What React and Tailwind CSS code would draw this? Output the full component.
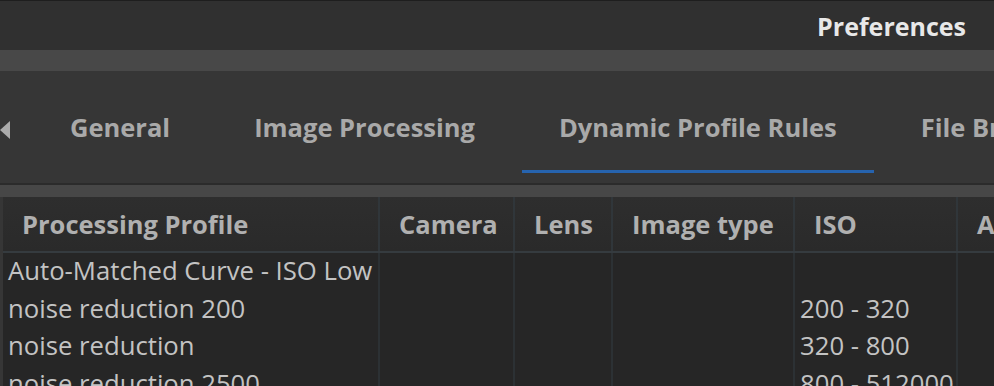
import React from 'react';

const tabs = ['General', 'Image Processing', 'Dynamic Profile Rules', 'File Browser'];
const activeTab = 2;

const columns = [
  { label: 'Processing Profile', width: 'w-[377px]' },
  { label: 'Camera', width: 'w-[135px]' },
  { label: 'Lens', width: 'w-[98px]' },
  { label: 'Image type', width: 'w-[182px]' },
  { label: 'ISO', width: 'w-[163px]' },
  { label: 'Aperture', width: 'w-[160px]' },
];

const rows = [
  ['Auto-Matched Curve - ISO Low', '', '', '', '', ''],
  ['noise reduction 200', '', '', '', '200 - 320', ''],
  ['noise reduction', '', '', '', '320 - 800', ''],
  ['noise reduction 2500', '', '', '', '800 - 512000', ''],
];

function App() {
  return (
    <div className="w-[994px] h-[386px] overflow-hidden bg-[#363636] font-['Open_Sans',sans-serif]">
      {/* title bar */}
      <div className="h-[50px] border-t border-[#1e1e1e] bg-[#303030] flex items-center justify-end pr-[28px] pt-[2px]">
        <span className="text-[25px] font-bold text-[#e8e8e8]">Preferences</span>
      </div>
      <div className="h-[21px] bg-[#484848]" />

      {/* tabs */}
      <div className="h-[112px] bg-[#363636] flex items-stretch overflow-hidden">
        <div className="w-[28px] shrink-0 flex items-center pt-[6px]">
          <svg width="11" height="18" viewBox="0 0 11 18">
            <path d="M10 0 L0 9 L10 18 Z" fill="#ababab" />
          </svg>
        </div>
        {tabs.map((t, i) => (
          <div key={t} className="px-[42px] flex flex-col shrink-0">
            <div className="flex-1 flex items-center pt-[13px]">
              <span className="text-[25.5px] font-bold text-[#a9a9a9] whitespace-nowrap">{t}</span>
            </div>
            <div className={i === activeTab ? 'h-[3px] bg-[#2663ae] -mx-[37px] mb-[10px]' : 'h-[3px] mb-[10px]'} />
          </div>
        ))}
      </div>
      <div className="h-[2px] bg-[#2b2b2b]" />
      <div className="h-[12px] bg-[#474747]" />

      {/* table */}
      <div className="ml-[3px] bg-[#262626] h-[200px]">
        <div className="flex h-[56px] bg-gradient-to-b from-[#2e2e2e] to-[#2a2a2a] border-b-2 border-[#353b3f]">
          {columns.map((c) => (
            <div key={c.label} className={`${c.width} shrink-0 flex items-center pl-[19px] border-r-2 border-[#30363a]`}>
              <span className="text-[25.5px] font-bold text-[#b0b0b0] whitespace-nowrap">{c.label}</span>
            </div>
          ))}
        </div>
        <div className="flex">
          {columns.map((c, ci) => (
            <div key={c.label} className={`${c.width} shrink-0 border-r-2 border-[#2c3134] h-[150px]`}>
              {rows.map((r, ri) => (
                <div key={ri} className="h-[37.5px] flex items-center pl-[5px]">
                  <span className="text-[25.7px] text-[#c3c3c3] whitespace-nowrap">{r[ci]}</span>
                </div>
              ))}
            </div>
          ))}
        </div>
      </div>
    </div>
  );
}

export default App;
